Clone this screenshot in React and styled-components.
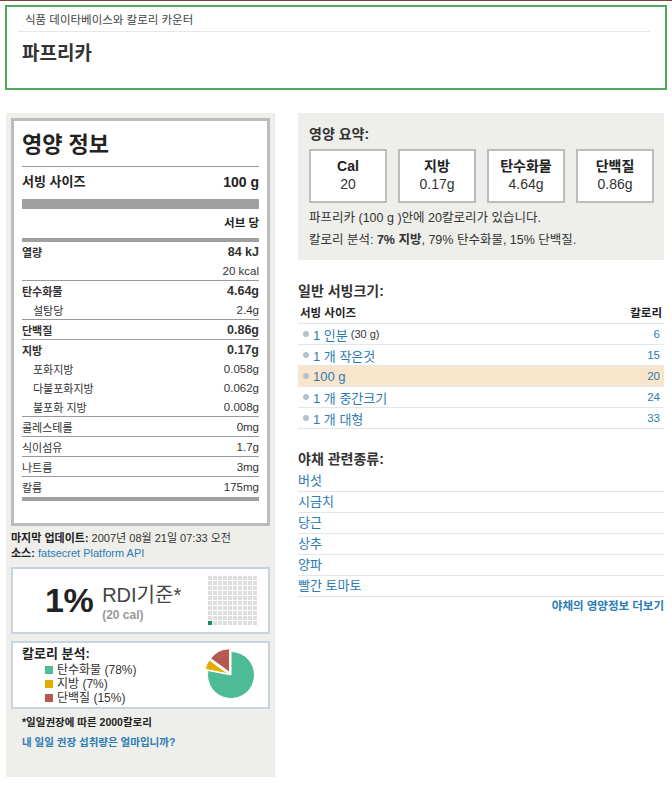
import styled, { createGlobalStyle } from 'styled-components';

const GlobalStyle = createGlobalStyle`
  html, body {
    margin: 0;
    padding: 0;
    background: #fff;
  }
  body {
    border-top: 1px solid #7d4040;
    font-family: "Liberation Sans", "Noto Sans CJK KR", sans-serif;
    color: #222;
  }
`;

const Page = styled.div`
  width: 672px;
  padding-bottom: 8px;
`;

const Header = styled.header`
  margin: 4px 5px 0;
  border: 2px solid #4fa85b;
  height: 81px;
  padding: 0 15px 0 11px;
`;

const Subtitle = styled.div`
  padding: 5px 0 0 7px;
  font-size: 11.5px;
  line-height: 16px;
  color: #444;
  border-bottom: 1px solid #e4e8ea;
  padding-bottom: 3px;
`;

const Title = styled.h1`
  margin: 10px 0 0 4px;
  font-size: 19px;
  line-height: 24px;
  font-weight: 700;
  color: #333;
`;

const Main = styled.div`
  display: flex;
  align-items: flex-start;
  gap: 23px;
  margin-top: 23px;
  padding-left: 6px;
`;

const LeftPanel = styled.aside`
  width: 259px;
  background: #eeeeea;
  padding: 5px 5px 25px;
`;

const Label = styled.div`
  background: #fff;
  border: 3px solid #bcbcbc;
  padding: 0 8px 22px;
`;

const LabelTitle = styled.div`
  padding-top: 10px;
  padding-bottom: 7px;
  font-size: 22px;
  line-height: 28px;
  font-weight: 700;
  color: #222;
  border-bottom: 1px solid #999;
`;

const ServingRow = styled.div`
  display: flex;
  justify-content: space-between;
  line-height: 30px;
  font-weight: 700;
  font-size: 13px;
  span:last-child { font-size: 14px; }
`;

const Bar = styled.div`
  height: ${({ $h }) => $h}px;
  margin-top: ${({ $m }) => $m || 0}px;
  background: #a0a0a0;
`;

const PerServe = styled.div`
  text-align: right;
  font-size: 11.5px;
  font-weight: 700;
  line-height: 29px;
`;

const Row = styled.div`
  display: flex;
  justify-content: space-between;
  align-items: center;
  height: ${({ $h }) => $h || 19}px;
  font-size: 11px;
  color: #333;
  border-top: ${({ $line }) => ($line ? '1px solid #999' : 'none')};
  padding-left: ${({ $indent }) => ($indent ? '11px' : '0')};
  font-weight: ${({ $bold }) => ($bold ? 700 : 400)};
`;

const Value = styled.span`
  font-size: ${({ $big }) => ($big ? '12.5px' : '11.5px')};
`;

const Meta = styled.div`
  margin-top: 5px;
  font-size: 11px;
  line-height: 15px;
  color: #333;
  b { color: #222; }
  a { color: #2b7bb5; text-decoration: none; }
`;

const RdiBox = styled.div`
  margin-top: 6px;
  height: 63px;
  border: 2px solid #c8d4e2;
  background: #fff;
  display: flex;
  align-items: center;
  justify-content: space-between;
  padding: 0 11px 0 32px;
`;

const RdiLeft = styled.div`
  display: flex;
  align-items: center;
  gap: 9px;
`;

const Percent = styled.div`
  font-size: 34px;
  font-weight: 700;
  color: #222;
  letter-spacing: -0.5px;
`;

const RdiText = styled.div`
  display: flex;
  flex-direction: column;
  margin-top: 4px;
  span:first-child {
    font-size: 20px;
    color: #444;
    line-height: 24px;
  }
  span:last-child {
    font-size: 12px;
    font-weight: 700;
    color: #999;
    line-height: 16px;
  }
`;

const Grid = styled.div`
  display: grid;
  grid-template-columns: repeat(10, 4px);
  grid-auto-rows: 4px;
  gap: 1px;
`;

const Cell = styled.div`
  background: ${({ $on }) => ($on ? '#168a5c' : '#dedede')};
`;

const BreakBox = styled.div`
  margin-top: 7px;
  height: 64px;
  border: 2px solid #c8d4e2;
  background: #fff;
  display: flex;
  justify-content: space-between;
  align-items: center;
  padding: 0 9px 0 9px;
`;

const BreakTitle = styled.div`
  font-size: 13px;
  font-weight: 700;
  line-height: 16px;
  color: #222;
  margin-bottom: 1px;
`;

const Legend = styled.div`
  display: flex;
  align-items: center;
  gap: 4px;
  margin-left: 23px;
  font-size: 12px;
  line-height: 14px;
  color: #333;
`;

const Swatch = styled.span`
  width: 8px;
  height: 8px;
  background: ${({ $c }) => $c};
`;

const Footnote = styled.div`
  margin: 3px 0 0 11px;
  font-size: 10.5px;
  font-weight: 700;
  line-height: 20px;
  color: #222;
  a { color: #2b7bb5; text-decoration: none; }
`;

const Right = styled.div`
  width: 366px;
`;

const Summary = styled.section`
  background: #eeeeea;
  padding: 12px 10px 9px 11px;
`;

const SectionTitle = styled.h2`
  margin: ${({ $m }) => $m || 0};
  font-size: 14px;
  line-height: ${({ $lh }) => $lh || 20}px;
  font-weight: 700;
  color: #333;
`;

const Boxes = styled.div`
  display: grid;
  grid-template-columns: repeat(4, 78px);
  gap: 11px;
  margin-top: 6px;
`;

const StatBox = styled.div`
  border: 2px solid #bcbcbc;
  background: #fff;
  padding-top: 6px;
  box-sizing: border-box;
  height: 54px;
  text-align: center;
  font-size: 14px;
  line-height: 18px;
  color: #333;
  b { display: block; color: #222; }
`;

const SummaryText = styled.p`
  margin: 4px 0 0;
  font-size: 12.5px;
  line-height: 22px;
  color: #333;
`;

const Table = styled.div`
  margin-top: 2px;
`;

const TableHead = styled.div`
  display: flex;
  justify-content: space-between;
  font-size: 11.5px;
  font-weight: 700;
  line-height: 20px;
  color: #222;
  padding: 0 2px;
  border-bottom: 1px solid #dfe4e8;
`;

const ServeRow = styled.div`
  display: flex;
  justify-content: space-between;
  align-items: center;
  height: 20px;
  padding: 0 4px 0 5px;
  border-bottom: 1px solid #e4e7ea;
  background: ${({ $active }) => ($active ? '#f9e5cb' : 'transparent')};
`;

const ServeName = styled.a`
  display: flex;
  align-items: center;
  gap: 3px;
  font-size: 13px;
  color: #2b7bb5;
  text-decoration: none;
  small { font-size: 11px; color: #333; }
  &::before {
    content: '';
    width: 6px;
    height: 6px;
    border-radius: 50%;
    background: #b3c0d0;
    margin-right: 1px;
  }
`;

const Cal = styled.span`
  font-size: 11.5px;
  color: #2b7bb5;
`;

const LinkRow = styled.a`
  display: block;
  height: 20px;
  line-height: 20px;
  font-size: 13px;
  color: #2b7bb5;
  text-decoration: none;
  border-bottom: 1px solid #e4e7ea;
`;

const More = styled.div`
  text-align: right;
  font-size: 11.5px;
  font-weight: 700;
  line-height: 18px;
  color: #2b7bb5;
`;

const labelRows = [
  [
    { name: '탄수화물', value: '4.64g', bold: true },
    { name: '설탕당', value: '2.4g', indent: true },
  ],
  [{ name: '단백질', value: '0.86g', bold: true }],
  [
    { name: '지방', value: '0.17g', bold: true },
    { name: '포화지방', value: '0.058g', indent: true },
    { name: '다불포화지방', value: '0.062g', indent: true },
    { name: '불포화 지방', value: '0.008g', indent: true },
  ],
  [{ name: '콜레스테롤', value: '0mg' }],
  [{ name: '식이섬유', value: '1.7g' }],
  [{ name: '나트륨', value: '3mg' }],
  [{ name: '칼륨', value: '175mg' }],
];

const servings = [
  { name: '1 인분', extra: '(30 g)', cal: 6 },
  { name: '1 개 작은것', cal: 15 },
  { name: '100 g', cal: 20, active: true },
  { name: '1 개 중간크기', cal: 24 },
  { name: '1 개 대형', cal: 33 },
];

const related = ['버섯', '시금치', '당근', '상추', '양파', '빨간 토마토'];

function pt(cx, cy, r, deg) {
  const a = (deg * Math.PI) / 180;
  return [cx + r * Math.sin(a), cy - r * Math.cos(a)];
}

function slice(cx, cy, r, a0, a1) {
  const [x0, y0] = pt(cx, cy, r, a0);
  const [x1, y1] = pt(cx, cy, r, a1);
  const large = a1 - a0 > 180 ? 1 : 0;
  return `M${cx},${cy} L${x0.toFixed(2)},${y0.toFixed(2)} A${r},${r} 0 ${large} 1 ${x1.toFixed(2)},${y1.toFixed(2)} Z`;
}

const Pie = () => {
  const c = 28;
  const r = 23.5;
  const off = (a0, a1, d) => {
    const m = ((a0 + a1) / 2) * (Math.PI / 180);
    return `translate(${(d * Math.sin(m)).toFixed(2)} ${(-d * Math.cos(m)).toFixed(2)})`;
  };
  return (
    <svg width="56" height="56" viewBox="0 0 56 56">
      <path d={slice(c, c, r, 0, 281)} fill="#4dbb96" stroke="#fff" strokeWidth="1" />
      <path d={slice(c, c, r, 281, 306)} fill="#e4ad00" stroke="#fff" strokeWidth="1" transform={off(281, 306, 3)} />
      <path d={slice(c, c, r, 306, 360)} fill="#b65a50" stroke="#fff" strokeWidth="1" transform={off(306, 360, 3)} />
    </svg>
  );
};

export default function App() {
  return (
    <Page>
      <GlobalStyle />
      <Header>
        <Subtitle>식품 데이타베이스와 칼로리 카운터</Subtitle>
        <Title>파프리카</Title>
      </Header>

      <Main>
        <LeftPanel>
          <Label>
            <LabelTitle>영양 정보</LabelTitle>
            <ServingRow>
              <span>서빙 사이즈</span>
              <span>100 g</span>
            </ServingRow>
            <Bar $h={10} $m={2} />
            <PerServe>서브 당</PerServe>
            <Bar $h={4} />
            <Row $h={20} $bold>
              <span>열량</span>
              <Value $big>84 kJ</Value>
            </Row>
            <Row $h={18}>
              <span />
              <Value>20 kcal</Value>
            </Row>
            {labelRows.map((group, gi) =>
              group.map((r, i) => (
                <Row key={r.name} $line={i === 0} $bold={r.bold} $indent={r.indent} $h={gi === 6 ? 20 : 19}>
                  <span>{r.name}</span>
                  <Value $big={r.bold}>{r.value}</Value>
                </Row>
              ))
            )}
            <Bar $h={4} />
          </Label>

          <Meta>
            <div><b>마지막 업데이트:</b> 2007년 08월 21일 07:33 오전</div>
            <div><b>소스:</b> <a href="#">fatsecret Platform API</a></div>
          </Meta>

          <RdiBox>
            <RdiLeft>
              <Percent>1%</Percent>
              <RdiText>
                <span>RDI기준*</span>
                <span>(20 cal)</span>
              </RdiText>
            </RdiLeft>
            <Grid>
              {Array.from({ length: 100 }, (_, i) => (
                <Cell key={i} $on={i === 90} />
              ))}
            </Grid>
          </RdiBox>

          <BreakBox>
            <div>
              <BreakTitle>칼로리 분석:</BreakTitle>
              <Legend><Swatch $c="#4dbb96" />탄수화물 (78%)</Legend>
              <Legend><Swatch $c="#e4ad00" />지방 (7%)</Legend>
              <Legend><Swatch $c="#b65a50" />단백질 (15%)</Legend>
            </div>
            <Pie />
          </BreakBox>

          <Footnote>
            <div>*일일권장에 따른 2000칼로리</div>
            <div><a href="#">내 일일 권장 섭취량은 얼마입니까?</a></div>
          </Footnote>
        </LeftPanel>

        <Right>
          <Summary>
            <SectionTitle $lh={18}>영양 요약:</SectionTitle>
            <Boxes>
              <StatBox><b>Cal</b>20</StatBox>
              <StatBox><b>지방</b>0.17g</StatBox>
              <StatBox><b>탄수화물</b>4.64g</StatBox>
              <StatBox><b>단백질</b>0.86g</StatBox>
            </Boxes>
            <SummaryText>
              파프리카 (100 g )안에 20칼로리가 있습니다.
              <br />
              칼로리 분석: <b>7% 지방</b>, 79% 탄수화물, 15% 단백질.
            </SummaryText>
          </Summary>

          <SectionTitle $m="21px 0 0">일반 서빙크기:</SectionTitle>
          <Table>
            <TableHead>
              <span>서빙 사이즈</span>
              <span>칼로리</span>
            </TableHead>
            {servings.map((s) => (
              <ServeRow key={s.name} $active={s.active}>
                <ServeName href="#">
                  {s.name}
                  {s.extra && <small>{s.extra}</small>}
                </ServeName>
                <Cal>{s.cal}</Cal>
              </ServeRow>
            ))}
          </Table>

          <SectionTitle $m="20px 0 2px">야채 관련종류:</SectionTitle>
          {related.map((r) => (
            <LinkRow key={r} href="#">{r}</LinkRow>
          ))}
          <More>야채의 영양정보 더보기</More>
        </Right>
      </Main>
    </Page>
  );
}
